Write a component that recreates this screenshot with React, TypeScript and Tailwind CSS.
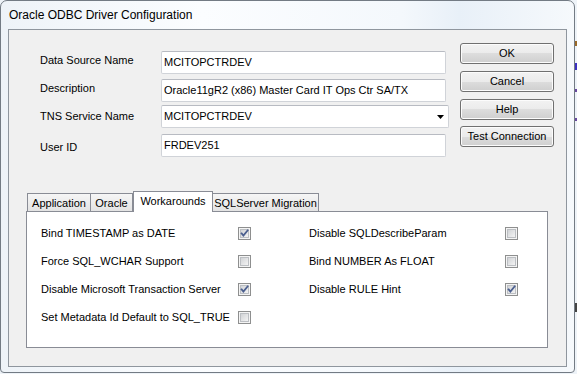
import React, { useId } from "react";

function Check({ checked }: { checked: boolean }) {
  const id = useId().replace(/:/g, "");
  return (
    <svg width="13" height="13" viewBox="0 0 13 13" className="shrink-0 block">
      <defs>
        <linearGradient id={`g${id}`} x1="0" y1="0" x2="1" y2="1">
          <stop offset="0" stopColor="#cfd1d4" />
          <stop offset="1" stopColor="#f6f6f6" />
        </linearGradient>
      </defs>
      <rect x="0.5" y="0.5" width="12" height="12" fill="#f4f4f4" stroke="#8e8f8f" />
      <rect x="2.5" y="2.5" width="8" height="8" fill={`url(#g${id})`} stroke="#bcbfc3" />
      {checked && (
        <path d="M3.6 6.4 L5.4 8.6 L9.6 3.4" fill="none" stroke="#4b5f8f" strokeWidth="1.8" strokeLinecap="square" />
      )}
    </svg>
  );
}

function Btn({ children }: { children: React.ReactNode }) {
  return (
    <div className="h-[21px] w-[94px] rounded-[3px] border border-[#707070] bg-[linear-gradient(#f2f2f2_0%,#ebebeb_50%,#dddddd_50%,#cfcfcf_100%)] shadow-[inset_0_0_0_1px_#fcfcfc] flex items-center justify-center leading-[13px]">
      {children}
    </div>
  );
}

function Input({ value, w }: { value: string; w: string }) {
  return (
    <div className={`${w} h-[23px] rounded-[2px] border border-[#d0d3d8] border-t-[#b8bbc2] bg-white pl-[2px] flex items-center leading-[13px] whitespace-nowrap`}>
      {value}
    </div>
  );
}

function Row({ l1, c1, l2, c2 }: { l1: string; c1: boolean; l2?: string; c2?: boolean }) {
  return (
    <div className="flex items-center h-[28px]">
      <div className="w-[211px] pl-[14px] leading-[13px] whitespace-nowrap">{l1}</div>
      <Check checked={c1} />
      {l2 !== undefined && (
        <>
          <div className="w-[58px]" />
          <div className="w-[196px] leading-[13px] whitespace-nowrap">{l2}</div>
          <Check checked={!!c2} />
        </>
      )}
    </div>
  );
}

export default function App() {
  return (
    <div className="relative w-[577px] h-[374px] overflow-hidden bg-[#eef3f8] font-['Liberation_Sans',Arial,sans-serif] text-[11px] text-black">
      <div className="w-[575px] h-[373px] flex flex-col border border-[#737b84] rounded-t-[7px] rounded-b-[4px] bg-[linear-gradient(90deg,#eef3f8_0%,#fbfdff_35%,#f4f8fc_70%,#e8f0f8_80%,#f6f9fc_100%)] px-[7px] pb-[5px]">
        <div className="h-[28px] flex items-center pl-[1px] text-[12px] leading-[14px] whitespace-nowrap">
          Oracle ODBC Driver Configuration
        </div>
        <div className="flex-1 border border-[#8f969e] bg-[#f0f0f0] flex flex-col">
          <div className="h-[161px] flex shrink-0">
            <div className="w-[451px] pl-[31px] flex flex-col">
              <div className="flex h-[23px] mt-[21px]">
                <div className="w-[121px] pt-[3px] leading-[13px]">Data Source Name</div>
                <Input value="MCITOPCTRDEV" w="w-[285px]" />
              </div>
              <div className="flex h-[23px] mt-[5px]">
                <div className="w-[121px] pt-[3px] leading-[13px]">Description</div>
                <Input value="Oracle11gR2 (x86) Master Card IT Ops Ctr SA/TX" w="w-[285px]" />
              </div>
              <div className="flex h-[23px] mt-[3px]">
                <div className="w-[121px] pt-[5px] leading-[13px]">TNS Service Name</div>
                <div className="w-[288px] h-[23px] rounded-[2px] border border-[#d0d3d8] border-t-[#b8bbc2] bg-white pl-[2px] pr-[4px] flex items-center leading-[13px]">
                  <span className="flex-1">MCITOPCTRDEV</span>
                  <svg width="7" height="4" viewBox="0 0 7 4" className="mt-[1px]">
                    <path d="M0 0 H7 L3.5 4 Z" fill="#000" />
                  </svg>
                </div>
              </div>
              <div className="flex h-[23px] mt-[6px]">
                <div className="w-[121px] pt-[7px] leading-[13px]">User ID</div>
                <Input value="FRDEV251" w="w-[285px]" />
              </div>
            </div>
            <div className="flex flex-col gap-[7px] pt-[13px]">
              <Btn>OK</Btn>
              <Btn>Cancel</Btn>
              <Btn>Help</Btn>
              <div className="-mt-[1px]">
                <Btn>Test Connection</Btn>
              </div>
            </div>
          </div>
          <div className="pl-[17px] flex flex-col">
            <div className="flex items-end h-[20px] pl-[1px]">
              <div className="w-[64px] h-[18px] border border-b-0 border-[#898c95] bg-[linear-gradient(#f6f6f6,#e3e3e3)] text-center pt-[3px] leading-[13px]">
                Application
              </div>
              <div className="w-[42px] h-[18px] border-t border-r border-[#898c95] bg-[linear-gradient(#f6f6f6,#e3e3e3)] text-center pt-[3px] leading-[13px]">
                Oracle
              </div>
              <div className="relative z-10 w-[80px] h-[21px] -mb-[1px] border border-b-0 border-[#898c95] bg-white text-center pt-[3px] leading-[13px]">
                Workarounds
              </div>
              <div className="w-[106px] h-[18px] border-t border-r border-[#898c95] bg-[linear-gradient(#f6f6f6,#e3e3e3)] text-center pt-[3px] leading-[13px] whitespace-nowrap">
                SQLServer Migration
              </div>
            </div>
            <div className="w-[522px] h-[137px] border border-[#898c95] bg-white pt-[7px] flex flex-col">
              <Row l1="Bind TIMESTAMP as DATE" c1={true} l2="Disable SQLDescribeParam" c2={false} />
              <Row l1="Force SQL_WCHAR Support" c1={false} l2="Bind NUMBER As FLOAT" c2={false} />
              <Row l1="Disable Microsoft Transaction Server" c1={true} l2="Disable RULE Hint" c2={true} />
              <Row l1="Set Metadata Id Default to SQL_TRUE" c1={false} />
            </div>
          </div>
        </div>
      </div>
      <div className="absolute left-[575px] top-[41px] w-[2px] h-[5px] bg-[#9a6a2a]" />
      <div className="absolute left-[575px] top-[63px] w-[2px] h-[7px] bg-[#3a30c0]" />
      <div className="absolute left-[575px] top-[89px] w-[2px] h-[3px] bg-[#6a4aa0]" />
      <div className="absolute left-[575px] top-[118px] w-[2px] h-[3px] bg-[#6a4aa0]" />
      <div className="absolute left-[575px] top-[303px] w-[2px] h-[9px] bg-[#444]" />
    </div>
  );
}
